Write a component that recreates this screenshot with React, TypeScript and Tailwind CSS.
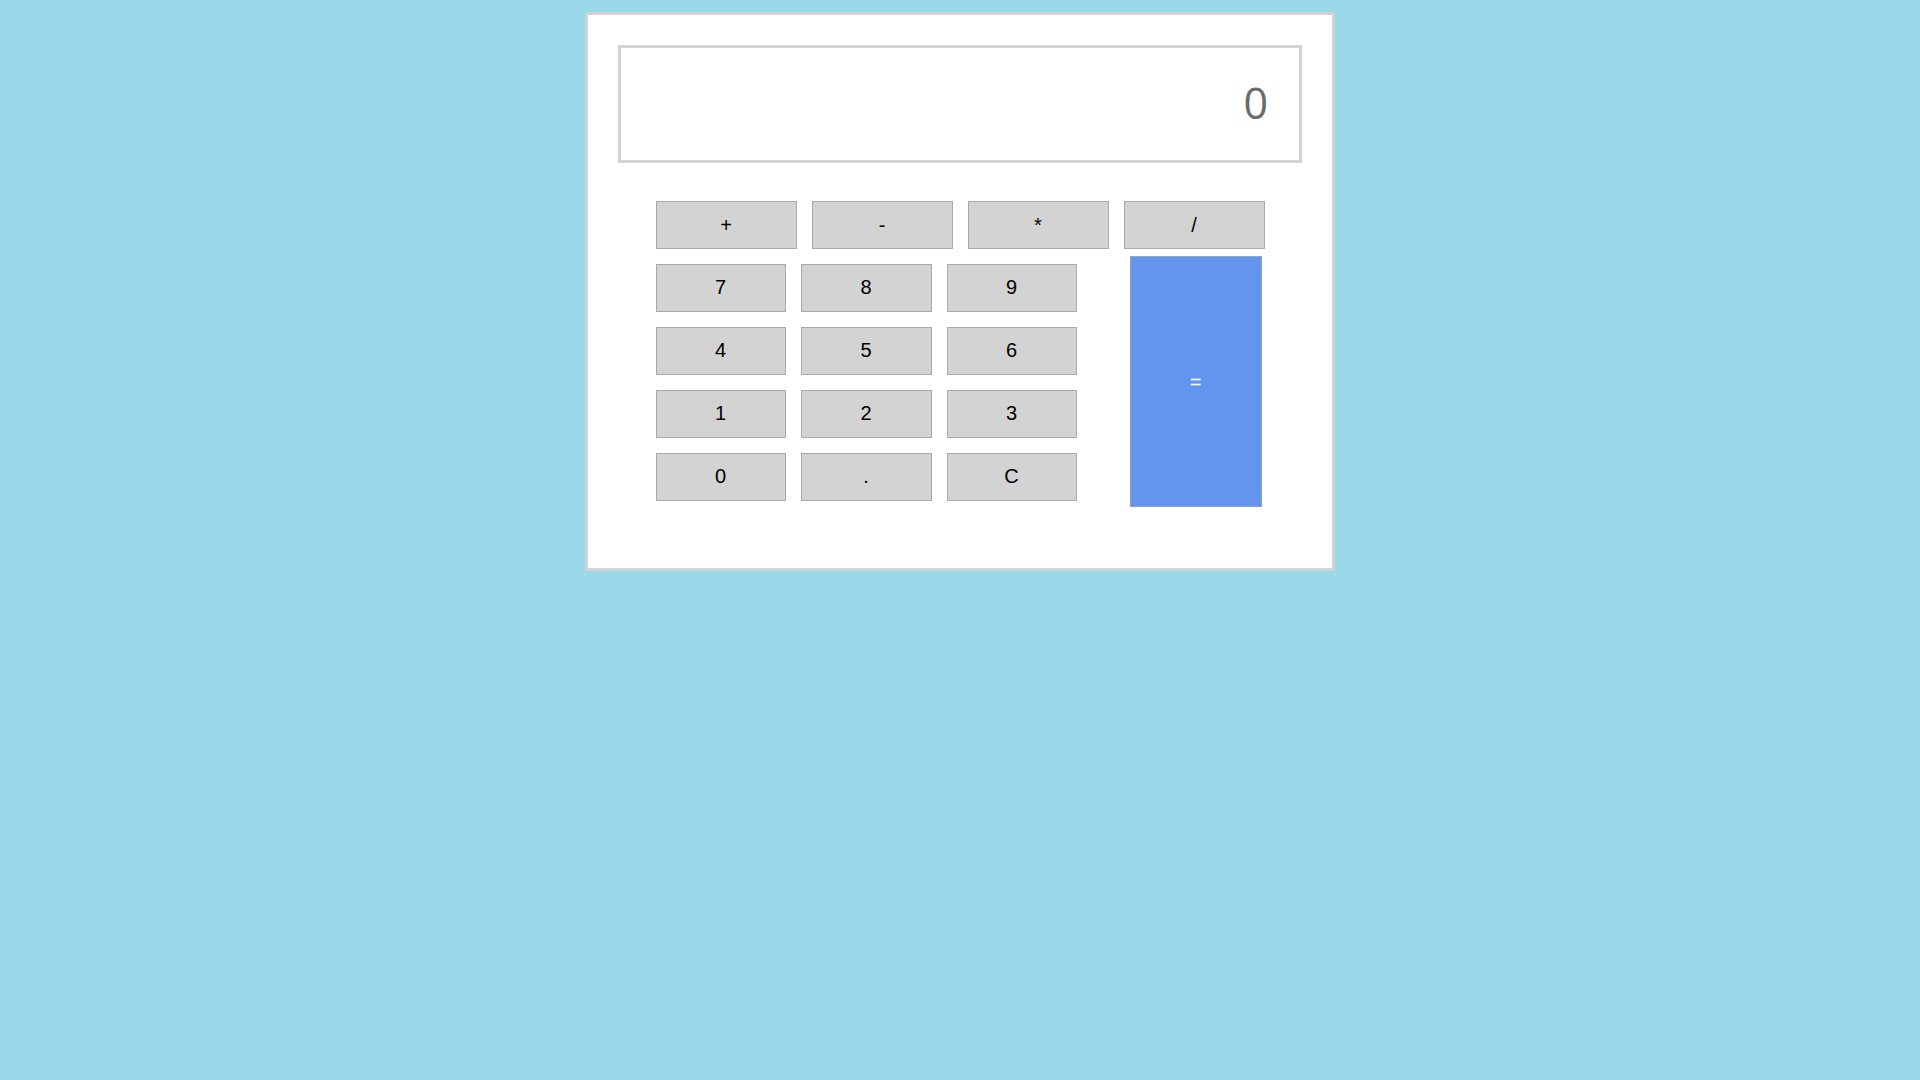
import React from 'react';

const ops = ['+', '-', '*', '/'];
const nums = ['7', '8', '9', '4', '5', '6', '1', '2', '3', '0', '.', 'C'];

export default function App() {
    return (
        <div className="min-h-screen w-full bg-[#9ad9ea] pt-[12px] font-['Liberation_Sans',Arial,sans-serif]">
            {/* Calculator card */}
            <div className="mx-auto w-[750px] border-[3px] border-[#d3d3d3] bg-white px-[30px] pt-[30px] pb-[61px]">
                {/* Display */}
                <div className="flex h-[118px] items-center justify-end border-[3px] border-[#d3d3d3] pr-[31px] pb-[4px]">
                    <span className="font-['Open_Sans',sans-serif] text-[43px] leading-none text-[#6b6b6b]">0</span>
                </div>

                {/* Keypad */}
                <div className="mx-auto mt-[38px] w-[609px]">
                    <div className="flex gap-[15px]">
                        {ops.map(op => (
                            <button
                                key={op}
                                className="h-[48px] w-[141px] border border-[#a9a9a9] bg-[#d3d3d3] text-[20px] text-black"
                            >
                                {op}
                            </button>
                        ))}
                    </div>

                    <div className="mt-[7px] flex items-start">
                        <div className="mt-[8px] grid grid-cols-[130px_131px_130px] gap-[15px]">
                            {nums.map(n => (
                                <button
                                    key={n}
                                    className="h-[48px] border border-[#a9a9a9] bg-[#d3d3d3] pb-[2px] text-[20px] text-black"
                                >
                                    {n}
                                </button>
                            ))}
                        </div>
                        <button className="ml-auto mr-[3px] h-[251px] w-[132px] border border-[#8fa3c4] bg-[#6495ed] text-[20px] text-white">
                            =
                        </button>
                    </div>
                </div>
            </div>
        </div>
    );
}
